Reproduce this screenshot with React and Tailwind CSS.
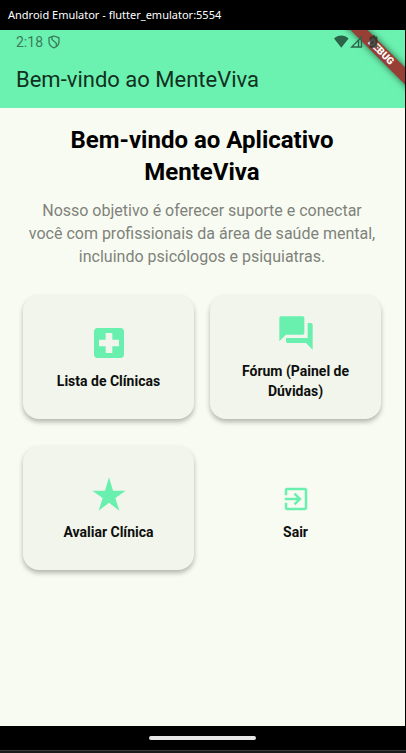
import { MdForum, MdLocalHospital, MdExitToApp } from "react-icons/md";

function StarIcon() {
  return (
    <svg viewBox="0 0 24 24" className="size-10" fill="currentColor" aria-hidden="true">
      <path d="M14.43 10 12 2l-2.43 8H2l6.18 4.41L5.83 22 12 17.31 18.18 22l-2.35-7.59L22 10z" />
    </svg>
  );
}

function ShieldIcon() {
  return (
    <svg
      width="14"
      height="14"
      viewBox="0 0 14 14"
      fill="none"
      stroke="currentColor"
      strokeWidth="1.3"
      aria-hidden="true"
    >
      <path d="M7 1 12 2.800V6.500c0 3-2 5.200-5 6.300-3-1.100-5-3.300-5-6.300V2.800z" />
      <path d="M5 1.900V4.500L9.300 8.200V11.500" />
    </svg>
  );
}

function StatusIcons() {
  return (
    <svg width="45" height="14" viewBox="0 0 45 14" aria-hidden="true" className="text-[#2b6448]">
      <path d="M0 3.600C4-.6 10.600-.6 14.600 3.600L7.300 12.800z" fill="currentColor" />
      <path d="M27.500 2v10H17.600zM24.500 5.500V12" fill="none" stroke="currentColor" strokeWidth="1.300" />
      <path
        d="M36.500 1.500h1.500V.3h3v1.200h1.500q.9 0 .9.900v9.500q0 .9-.9.900h-6q-.9 0-.9-.9V2.400q0-.9.900-.9z"
        fill="#30342c"
        fillOpacity="0.850"
      />
    </svg>
  );
}

function DebugRibbon() {
  return (
    <div className="pointer-events-none absolute inset-0 overflow-hidden">
      <div className="absolute -right-7 top-4 flex h-3 w-[104px] rotate-45 items-center justify-center bg-[#983f35] text-[10px] font-black leading-3 text-white shadow-[0_0_7px_rgba(0,0,0,0.6)]">
        DEBUG
      </div>
    </div>
  );
}

function MenuCard({ icon, label, flat }) {
  return (
    <button
      type="button"
      className={
        flat
          ? "flex h-[124px] flex-col items-center justify-center gap-2 rounded-2xl px-4"
          : "flex h-[124px] flex-col items-center justify-center gap-2 rounded-2xl bg-[#f2f5ec] px-4 shadow-[0_3px_5px_rgba(0,0,0,0.28)]"
      }
    >
      <span className="flex h-10 items-end text-[#69f0ae]">{icon}</span>
      <span className="text-sm font-bold leading-5 text-[#0c0f0c]">{label}</span>
    </button>
  );
}

export default function App() {
  return (
    <div className="flex min-h-screen flex-col bg-black font-[Roboto,sans-serif]">
      <div className="flex h-[30px] items-center px-2 font-['Noto_Sans',sans-serif] text-[11px] text-white">
        Android Emulator - flutter_emulator:5554
      </div>

      <div className="flex flex-1 flex-col border-r border-black bg-[#f8fbf2]">
        <header className="relative h-[78px] bg-[#6bf2b0]">
          <DebugRibbon />
          <div className="relative flex h-6 items-center justify-between pl-4 pr-[26px]">
            <div className="flex items-center gap-1 text-sm text-[#3a7c5b]">
              <span>2:18</span>
              <ShieldIcon />
            </div>
            <StatusIcons />
          </div>
          <h1 className="relative px-4 pt-2 text-[22px] leading-9 text-[#12301f]">Bem-vindo ao MenteViva</h1>
        </header>

        <main className="flex flex-1 flex-col pl-[23px] pr-6 pt-4">
          <h2 className="px-4 text-center text-2xl font-bold leading-8 text-black">
            Bem-vindo ao Aplicativo MenteViva
          </h2>
          <p className="mt-[11px] px-1 text-center text-base leading-[23px] text-[#7f827b]">
            Nosso objetivo é oferecer suporte e conectar você com profissionais da área de saúde mental, incluindo
            psicólogos e psiquiatras.
          </p>
          <div className="mt-[27px] grid grid-cols-2 gap-x-4 gap-y-[27px]">
            <MenuCard icon={<MdLocalHospital className="size-10" />} label="Lista de Clínicas" />
            <MenuCard icon={<MdForum className="size-10" />} label="Fórum (Painel de Dúvidas)" />
            <MenuCard icon={<StarIcon />} label="Avaliar Clínica" />
            <MenuCard icon={<MdExitToApp className="size-[30px]" />} label="Sair" flat />
          </div>
        </main>
      </div>

      <div className="flex h-6 items-center justify-center pr-0.5">
        <div className="h-1 w-[107px] rounded-full bg-[#e6e6e6]" />
      </div>
      <div className="h-[3px] border-t border-[#3a3a3a] bg-[#1a1a1a]" />
    </div>
  );
}
